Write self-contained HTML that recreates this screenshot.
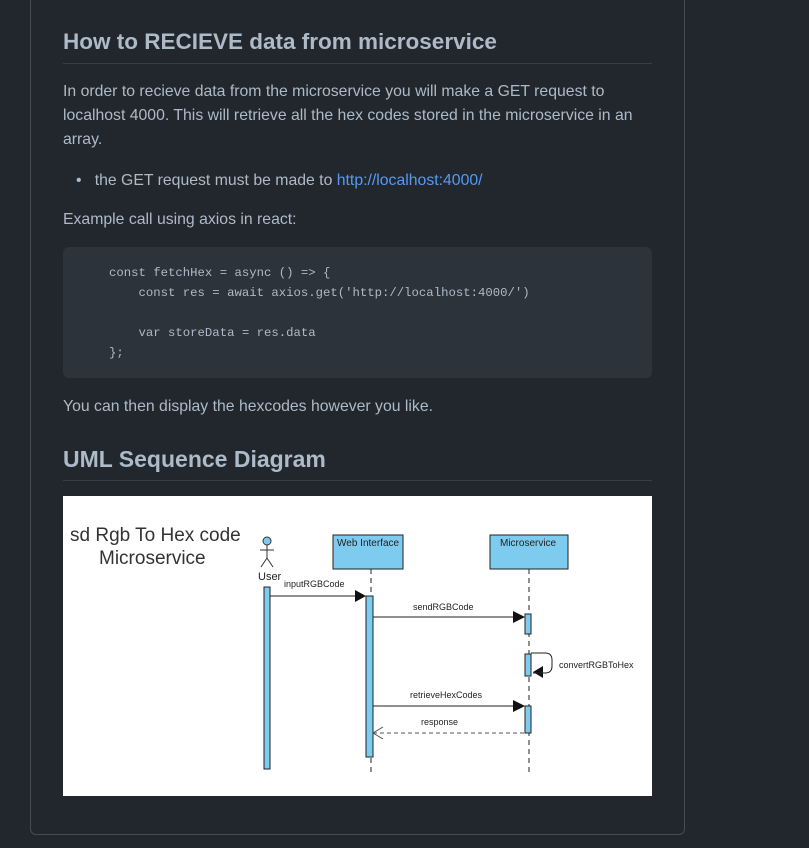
<!DOCTYPE html>
<html><head><style>
html,body{margin:0;padding:0;background:#22272e;width:809px;height:848px;overflow:hidden;font-family:"Liberation Sans",sans-serif;color:#adbac7}
.box{position:absolute;left:30px;top:-10px;width:653px;height:843px;border:1px solid #444c56;border-radius:6px}
.t{position:absolute;left:63px;white-space:nowrap}
h2{position:absolute;left:63px;margin:0;font-size:23px;font-weight:600;width:589px;border-bottom:1px solid #373e47;padding-bottom:6px;line-height:30px}
p{margin:0;font-size:15.8px;line-height:24px}
a{color:#539bf5;text-decoration:none}
.code{position:absolute;left:63px;top:247px;width:589px;height:131px;background:#2d333b;border-radius:6px}
pre{margin:0;position:absolute;left:109px;top:262px;font-family:"Liberation Mono",monospace;font-size:12.3px;line-height:20px;color:#adbac7}
.img{position:absolute;left:63px;top:496px;width:589px;height:300px;background:#fff}
</style></head><body>
<div class="box"></div>
<h2 style="top:27px;font-size:22.5px">How to RECIEVE data from microservice</h2>
<p class="t" style="top:80px;white-space:normal;width:589px">In order to recieve data from the microservice you will make a GET request to localhost 4000. This will retrieve all the hex codes stored in the microservice in an array.</p>
<p class="t" style="top:169px;left:76px">•&nbsp;&nbsp; the GET request must be made to <a>http://localhost:4000/</a></p>
<p class="t" style="top:208px">Example call using axios in react:</p>
<div class="code"></div>
<pre style="top:263px">const fetchHex = async () =&gt; {
    const res = await axios.get('http://localhost:4000/')

    var storeData = res.data
};</pre>
<p class="t" style="top:395px">You can then display the hexcodes however you like.</p>
<h2 style="top:444px">UML Sequence Diagram</h2>
<div class="img">
<svg width="589" height="300" viewBox="0 0 589 300" font-family="Liberation Sans,sans-serif">
<text x="7" y="45" font-size="19" fill="#333">sd Rgb To Hex code</text>
<text x="36" y="68" font-size="19" fill="#333">Microservice</text>
<circle cx="204" cy="45" r="4" fill="#7ecbf0" stroke="#333"/>
<path d="M204 49V62M197 54H211M204 62L198 71M204 62L210 71" stroke="#333" fill="none"/>
<text x="195" y="84" font-size="11" fill="#222">User</text>
<rect x="270" y="39" width="70" height="34" fill="#7ecbf0" stroke="#222"/>
<text x="274" y="50" font-size="10" fill="#222">Web Interface</text>
<rect x="427" y="39" width="78" height="34" fill="#7ecbf0" stroke="#222"/>
<text x="437" y="50" font-size="10" fill="#222">Microservice</text>
<path d="M308 73V278M466 73V278" stroke="#222" stroke-dasharray="5,4"/>
<rect x="201" y="91" width="6" height="182" fill="#7ecbf0" stroke="#222"/>
<rect x="303" y="100" width="7" height="161" fill="#7ecbf0" stroke="#222"/>
<rect x="462" y="118" width="6" height="20" fill="#7ecbf0" stroke="#222"/>
<rect x="462" y="158" width="6" height="22" fill="#7ecbf0" stroke="#222"/>
<rect x="462" y="210" width="6" height="27" fill="#7ecbf0" stroke="#222"/>
<path d="M207 100H296M310 121H452M310 210H452" stroke="#222"/>
<path d="M292 94L303 100L292 106ZM450 115L462 121L450 127ZM450 204L462 210L450 216ZM470 176L480 170V182Z" fill="#111"/>
<path d="M468 157H482Q489 157 489 164V170Q489 177 482 177H470" stroke="#222" fill="none"/>
<path d="M310 237H462" stroke="#555" stroke-dasharray="4,3"/>
<path d="M320 231L310 237L320 243" stroke="#555" fill="none"/>
<text x="221" y="91" font-size="9" fill="#222">inputRGBCode</text>
<text x="350" y="114" font-size="9" fill="#222">sendRGBCode</text>
<text x="496" y="172" font-size="9" fill="#222">convertRGBToHex</text>
<text x="347" y="202" font-size="9" fill="#222">retrieveHexCodes</text>
<text x="358" y="229" font-size="9" fill="#222">response</text>
</svg>
</div>
</body></html>
